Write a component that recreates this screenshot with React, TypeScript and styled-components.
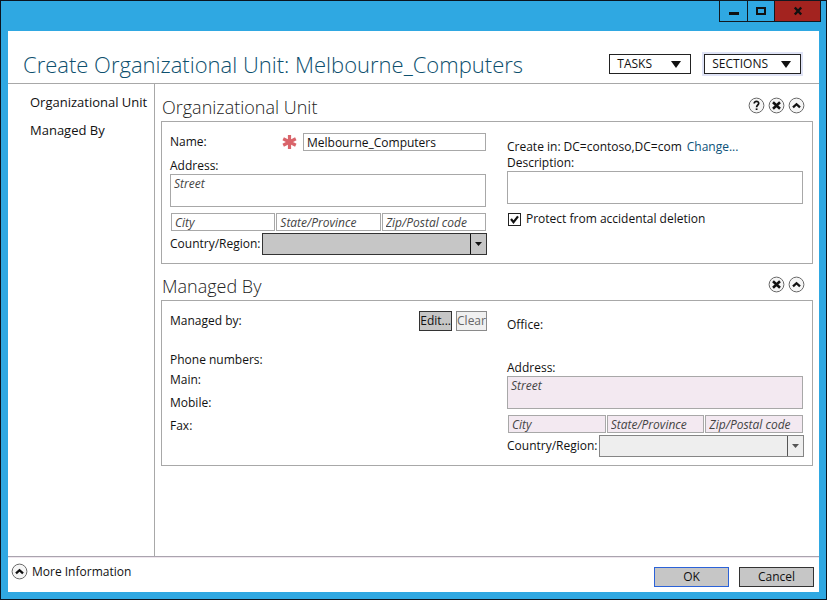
import React from "react";
import styled, { createGlobalStyle, css } from "styled-components";

const GlobalStyle = createGlobalStyle`
  *, *::before, *::after { box-sizing: border-box; }
  body {
    margin: 0;
    font-family: "Open Sans", "Noto Sans", sans-serif;
    font-size: 12px;
    line-height: 16px;
    color: #111;
  }
  button, input, select, textarea { font: inherit; color: inherit; margin: 0; border-radius: 0; }
`;

const Window = styled.div`
  display: flex;
  flex-direction: column;
  min-height: 100vh;
  border: 1px solid #0a1420;
  background: #2fa8e2;
  padding: 0 7px 7px;
`;

const TitleBar = styled.header`
  display: flex;
  justify-content: flex-end;
  align-items: flex-start;
  height: 30px;
`;

const WindowControls = styled.div`
  display: flex;
  margin: -1px -2px 0 0;
  border: 1px solid #111820;
`;

const CaptionButton = styled.button<{ $wide?: boolean }>`
  display: grid;
  place-items: center;
  width: ${(p) => (p.$wide ? 46 : 27)}px;
  height: 20px;
  padding: 0;
  border: 0;
  background: ${(p) => (p.$wide ? "#a3231f" : "transparent")};
  & + & { border-left: 1px solid #111820; }
`;

const Surface = styled.div`
  flex: 1;
  display: flex;
  flex-direction: column;
  background: #fff;
`;

const Heading = styled.div`
  display: flex;
  align-items: center;
  gap: 13px;
  padding: 14px 18px 0 15px;
  height: 53px;
  border-bottom: 1px solid #a8a8a8;
`;

const Title = styled.h1`
  flex: 1;
  margin: 0;
  font-size: 22px;
  line-height: 36px;
  font-weight: 300;
  white-space: nowrap;
  color: #0d506e;
`;

const MenuButton = styled.button<{ $active?: boolean }>`
  display: flex;
  align-items: center;
  justify-content: space-between;
  gap: 13px;
  height: 20px;
  min-width: 82px;
  padding: 0 9px 0 7px;
  border: 1px solid #222;
  background: #fff;
  ${(p) => p.$active && css`box-shadow: 0 0 0 2px #dfe3f6;`}
`;

const Body = styled.div`
  flex: 1;
  display: flex;
`;

const Nav = styled.nav`
  display: flex;
  flex-direction: column;
  gap: 12px;
  width: 147px;
  padding: 10px 0 0 22px;
  border-right: 1px solid #a8a8a8;
`;

const NavLink = styled.a`
  font-size: 13px;
  white-space: nowrap;
  color: #111;
  text-decoration: none;
`;

const Sections = styled.main`
  flex: 1;
  padding: 1px 6px 0;
`;

const SectionHead = styled.div`
  display: flex;
  align-items: flex-end;
  justify-content: space-between;
  height: 36px;
  padding: 0 8px 2px 1px;
`;

const SectionTitle = styled.h2`
  margin: 0;
  font-size: 18px;
  line-height: 24px;
  font-weight: 300;
  color: #222;
`;

const IconRow = styled.div`
  display: flex;
  gap: 3px;
  padding-bottom: 5px;
`;

const RoundButton = styled.button`
  display: grid;
  width: 17px;
  height: 17px;
  padding: 0;
  border: 0;
  background: none;
`;

const Panel = styled.div<{ $top?: number }>`
  display: grid;
  grid-template-columns: 317fr 297fr;
  column-gap: 20px;
  padding: ${(p) => p.$top ?? 11}px 8px 8px;
  border: 1px solid #a8a8a8;
`;

const Column = styled.div<{ $top?: number }>`
  display: flex;
  flex-direction: column;
  padding-top: ${(p) => p.$top ?? 0}px;
`;

const Line = styled.div<{ $space?: number }>`
  display: flex;
  align-items: center;
  margin-bottom: ${(p) => p.$space ?? 0}px;
`;

const Spacer = styled.span`
  flex: 1;
`;

const Label = styled.label`
  white-space: nowrap;
`;

const FieldName = styled.span<{ $space?: number }>`
  margin-bottom: ${(p) => p.$space ?? 0}px;
`;

const field = css`
  border: 1px solid #a8a8a8;
  background: #fff;
  outline: 0;
  &::placeholder { color: #444; font-style: italic; opacity: 1; }
  &:disabled { background: #f3e9f1; }
`;

const TextInput = styled.input`
  ${field}
  width: 100%;
  min-width: 0;
  height: 18px;
  padding: 0 3px;
`;

const NameInput = styled(TextInput)`
  width: 183px;
  margin: 0 1px 0 6px;
`;

const TextArea = styled.textarea`
  ${field}
  display: block;
  height: 33px;
  margin-right: 1px;
  padding: 1px 3px;
  resize: none;
`;

const Parts = styled.div`
  display: grid;
  grid-template-columns: repeat(3, 1fr);
  gap: 1px;
  margin: 6px 1px 2px;
`;

const SelectBox = styled.div<{ $off?: boolean }>`
  flex: 1;
  display: grid;
  align-items: center;
  margin-left: 1px;
  color: ${(p) => (p.$off ? "#555" : "#111")};
  & > * { grid-area: 1 / 1; }
  & > svg { justify-self: end; pointer-events: none; }
`;

const Select = styled.select`
  appearance: none;
  width: 100%;
  height: 22px;
  padding: 0 20px 0 4px;
  border: 1px solid #333;
  background: #c6c6c6;
  &:disabled { border-color: #858585; background: #eee; opacity: 1; }
`;

const Location = styled.span`
  flex: 1;
  margin-left: 3px;
`;

const ChangeLink = styled.a`
  margin-left: 5px;
  color: #0b527a;
  text-decoration: none;
`;

const CheckLabel = styled.label`
  display: flex;
  align-items: center;
  gap: 5px;
  margin: 7px 0 0 1px;
`;

const CheckBox = styled.span`
  display: grid;
  width: 13px;
  height: 13px;
  & > * { grid-area: 1 / 1; }
  & > svg { pointer-events: none; visibility: hidden; }
  & > input:checked + svg { visibility: visible; }
`;

const Check = styled.input`
  appearance: none;
  width: 13px;
  height: 13px;
  border: 1px solid #222;
  background: #fff;
`;

const SmallButton = styled.button`
  height: 20px;
  min-width: 31px;
  margin-left: 4px;
  padding: 0;
  border: 1px solid #333;
  background: #c6c6c6;
  &:disabled { border-color: #8a8a8a; background: #f0f0f0; color: #666; }
`;

const Footer = styled.footer`
  display: flex;
  align-items: center;
  height: 36px;
  padding: 5px 5px 0 3px;
  border-top: 1px solid #a9a4ae;
  box-shadow: inset 0 1px #efe6ee;
`;

const MoreButton = styled.button`
  display: flex;
  align-items: center;
  gap: 4px;
  padding: 0 0 11px;
  border: 0;
  background: none;
`;

const DialogButton = styled.button<{ $primary?: boolean }>`
  width: 75px;
  height: 20px;
  margin-left: 10px;
  padding: 0;
  border: 1px solid ${(p) => (p.$primary ? "#2b62d8" : "#333")};
  background: #c6c6c6;
`;

const Down = () => (
  <svg width="10" height="7" viewBox="0 0 10 7" aria-hidden="true">
    <path d="M0 0H10L5 7Z" fill="#111" />
  </svg>
);

type Glyph = "help" | "close" | "up";

const RoundIcon = ({ glyph }: { glyph: Glyph }) => (
  <svg width="17" height="17" viewBox="0 0 17 17" fill="none" aria-hidden="true">
    <circle cx="8.5" cy="8.5" r="7.4" fill="#f5f5f5" stroke="#6a6a6a" />
    {glyph === "help" && (
      <>
        <path d="M6.2 6.4C6.2 3.7 10.8 3.7 10.7 6.4C10.6 8.1 8.6 8 8.6 10.3" stroke="#111" strokeWidth="1.7" />
        <path d="M7.7 11.4H9.5V13H7.7Z" fill="#111" />
      </>
    )}
    {glyph === "close" && <path d="M5 5.3L12 11.7M12 5.3L5 11.7" stroke="#111" strokeWidth="2.6" />}
    {glyph === "up" && <path d="M5 10.4L8.5 7.2L12 10.4" stroke="#111" strokeWidth="2.3" />}
  </svg>
);

const Required = () => (
  <svg width="15" height="16" viewBox="0 0 15 16" role="img" aria-label="Required">
    <path d="M7.5 1V15M1.2 4.8L13.8 11.2M13.8 4.8L1.2 11.2" stroke="#d9646a" strokeWidth="3.2" />
  </svg>
);

const Head = ({ title, icons }: { title: string; icons: Glyph[] }) => (
  <SectionHead>
    <SectionTitle>{title}</SectionTitle>
    <IconRow>
      {icons.map((g) => (
        <RoundButton key={g} aria-label={`${g} ${title}`}>
          <RoundIcon glyph={g} />
        </RoundButton>
      ))}
    </IconRow>
  </SectionHead>
);

const Address = ({ id, disabled }: { id: string; disabled?: boolean }) => (
  <>
    <Label htmlFor={`${id}-street`}>Address:</Label>
    <TextArea id={`${id}-street`} placeholder="Street" disabled={disabled} />
    <Parts>
      <TextInput aria-label="City" placeholder="City" disabled={disabled} />
      <TextInput aria-label="State/Province" placeholder="State/Province" disabled={disabled} />
      <TextInput aria-label="Zip/Postal code" placeholder="Zip/Postal code" disabled={disabled} />
    </Parts>
    <Line>
      <Label htmlFor={`${id}-country`}>Country/Region:</Label>
      <SelectBox $off={disabled}>
        <Select id={`${id}-country`} disabled={disabled}>
          <option value=""></option>
        </Select>
        <svg width="17" height="22" viewBox="0 0 17 22" aria-hidden="true">
          <path d="M0.5 1V21" stroke="currentColor" />
          <path d="M5 9H12L8.5 13Z" fill="currentColor" />
        </svg>
      </SelectBox>
    </Line>
  </>
);

export default function App() {
  return (
    <>
      <GlobalStyle />
      <Window>
        <TitleBar>
          <WindowControls>
            <CaptionButton aria-label="Minimize">
              <svg width="12" height="12" viewBox="0 0 12 12"><path d="M1 7H11V10H1Z" fill="#111" /></svg>
            </CaptionButton>
            <CaptionButton aria-label="Maximize">
              <svg width="12" height="12" viewBox="0 0 12 12" fill="none"><path d="M2 3H10V9H2Z" stroke="#111" strokeWidth="2" /></svg>
            </CaptionButton>
            <CaptionButton $wide aria-label="Close">
              <svg width="12" height="12" viewBox="0 0 12 12" fill="none"><path d="M2.8 2.5L9.2 9.5M9.2 2.5L2.8 9.5" stroke="#111" strokeWidth="2.4" /></svg>
            </CaptionButton>
          </WindowControls>
        </TitleBar>
        <Surface>
          <Heading>
            <Title>Create Organizational Unit: Melbourne_Computers</Title>
            <MenuButton>TASKS<Down /></MenuButton>
            <MenuButton $active>SECTIONS<Down /></MenuButton>
          </Heading>
          <Body>
            <Nav>
              <NavLink href="#unit">Organizational Unit</NavLink>
              <NavLink href="#managed">Managed By</NavLink>
            </Nav>
            <Sections>
              <section id="unit">
                <Head title="Organizational Unit" icons={["help", "close", "up"]} />
                <Panel>
                  <Column>
                    <Line $space={7}>
                      <Label htmlFor="name">Name:</Label>
                      <Spacer />
                      <Required />
                      <NameInput id="name" defaultValue="Melbourne_Computers" />
                    </Line>
                    <Address id="unit" />
                  </Column>
                  <Column $top={6}>
                    <Line>
                      <span>Create in:</span>
                      <Location>
                        DC=contoso,DC=com
                        <ChangeLink href="#change">Change...</ChangeLink>
                      </Location>
                    </Line>
                    <Label htmlFor="description">Description:</Label>
                    <TextArea id="description" />
                    <CheckLabel>
                      <CheckBox>
                        <Check type="checkbox" defaultChecked />
                        <svg width="13" height="13" viewBox="0 0 13 13" fill="none" aria-hidden="true">
                          <path d="M3 6L5.5 9.2L10 3.4" stroke="#111" strokeWidth="2.2" />
                        </svg>
                      </CheckBox>
                      Protect from accidental deletion
                    </CheckLabel>
                  </Column>
                </Panel>
              </section>
              <section id="managed">
                <Head title="Managed By" icons={["close", "up"]} />
                <Panel $top={10}>
                  <Column>
                    <Line $space={21}>
                      <span>Managed by:</span>
                      <Spacer />
                      <SmallButton>Edit...</SmallButton>
                      <SmallButton disabled>Clear</SmallButton>
                    </Line>
                    <FieldName $space={4}>Phone numbers:</FieldName>
                    <FieldName $space={7}>Main:</FieldName>
                    <FieldName $space={7}>Mobile:</FieldName>
                    <FieldName>Fax:</FieldName>
                  </Column>
                  <Column $top={6}>
                    <FieldName $space={27}>Office:</FieldName>
                    <Address id="manager" disabled />
                  </Column>
                </Panel>
              </section>
            </Sections>
          </Body>
          <Footer>
            <MoreButton><RoundIcon glyph="up" />More Information</MoreButton>
            <Spacer />
            <DialogButton $primary>OK</DialogButton>
            <DialogButton>Cancel</DialogButton>
          </Footer>
        </Surface>
      </Window>
    </>
  );
}
